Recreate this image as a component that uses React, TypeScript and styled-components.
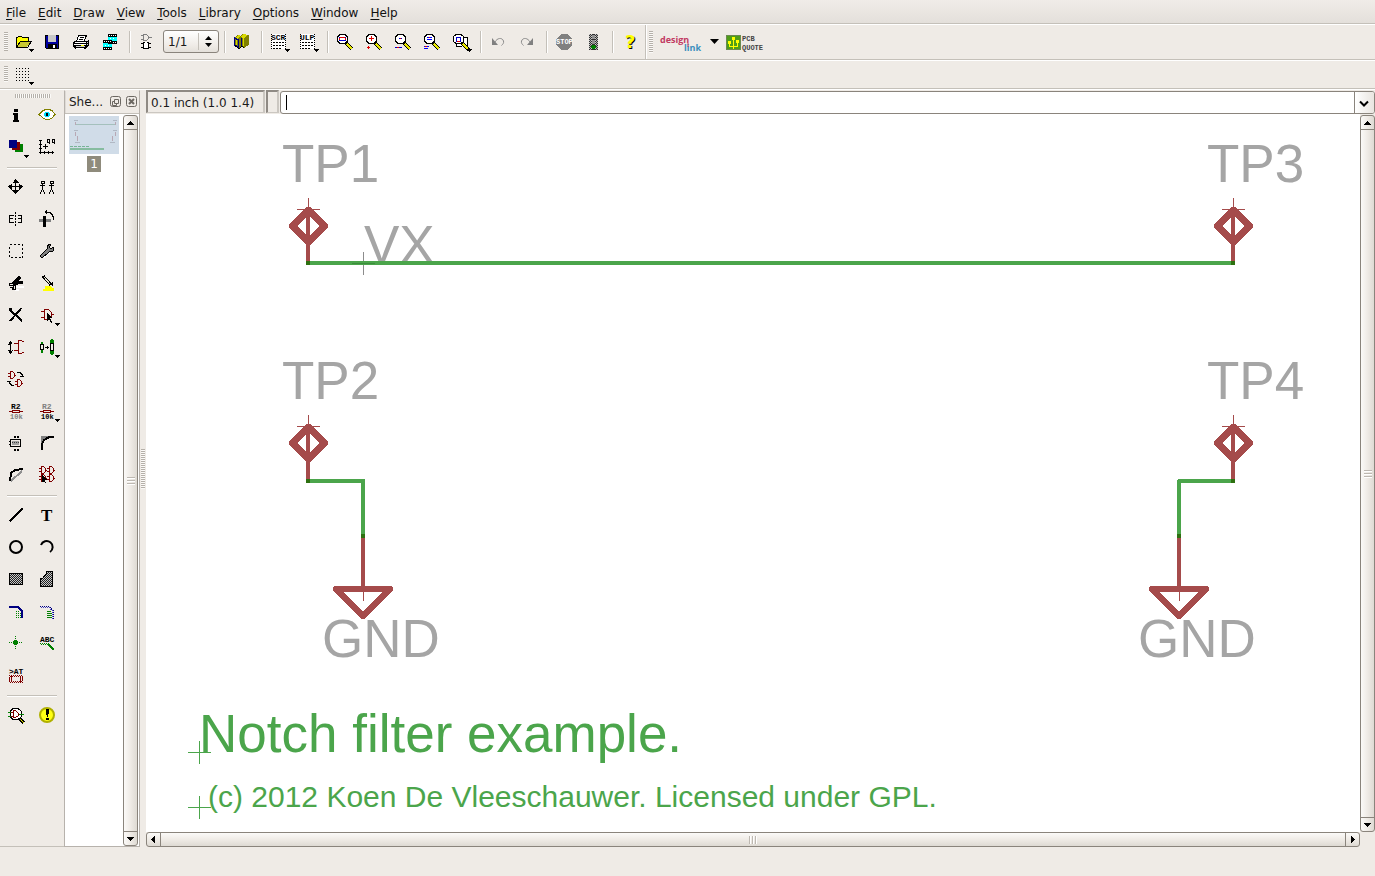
import React from "react";
import styled, { createGlobalStyle } from "styled-components";

const C = {
  face: "#efebe6",
  line: "#c4c0b9",
  edge: "#8a847c",
  red: "#800000",
  navy: "#000080",
  green: "#008000",
  olive: "#808000",
  yellow: "#ffff00",
  symbol: "#a54b4b",
  net: "#4ba54b",
  name: "#a5a5a5",
};

const Global = createGlobalStyle`
  * { box-sizing: border-box; }
  html, body { margin: 0; background: ${C.face}; }
  body, button, input { font: 12px/16px "DejaVu Sans", sans-serif; color: #1a1a1a; }
  button { border: 0; padding: 0; background: none; }
`;

const Page = styled.div`
  display: flex;
  flex-direction: column;
  min-height: 100vh;
  background: ${C.face};
`;

const MenuBar = styled.nav`
  display: flex;
  gap: 12px;
  height: 25px;
  padding: 1px 6px 0;
  background: linear-gradient(#f0ece8, #e3dfda);
  border-bottom: 1px solid #fff;
  box-shadow: inset 0 -1px 0 ${C.line};
`;

const MenuItem = styled.button`
  height: 23px;
  color: #111;
  u { text-underline-offset: 2px; }
`;

const Toolbar = styled.div<{ $height: number }>`
  display: flex;
  align-items: center;
  height: ${(p) => p.$height}px;
  padding: 0 0 2px 4px;
  border-bottom: 1px solid #fff;
  box-shadow: inset 0 -1px 0 ${C.line};
`;

const Grip = styled.span<{ $size: number; $across?: boolean; $gap?: number }>`
  flex: none;
  width: ${(p) => (p.$across ? p.$size : 4)}px;
  height: ${(p) => (p.$across ? 4 : p.$size)}px;
  margin-right: ${(p) => p.$gap ?? 0}px;
  background: repeating-linear-gradient(
    ${(p) => (p.$across ? "90deg" : "180deg")},
    #b5b0a9 0 1px,
    #fbfaf8 1px 2px
  );
`;

const ToolButton = styled.button`
  flex: none;
  display: flex;
  align-items: center;
  width: 29px;
  height: 32px;
  padding-left: 3px;
`;

const Divider = styled.span<{ $gap?: number }>`
  flex: none;
  width: 2px;
  height: 22px;
  margin: 0 2px 0 ${(p) => p.$gap ?? 4}px;
  background: linear-gradient(90deg, ${C.line} 0 1px, #fff 1px 2px);
`;

const Spin = styled.div`
  flex: none;
  display: flex;
  align-items: center;
  width: 56px;
  height: 23px;
  margin-left: 1px;
  border: 1px solid ${C.edge};
  border-radius: 3px;
  background: linear-gradient(#fff, #efebe6 70%, #e4e0da);
`;

const SpinInput = styled.input`
  width: 35px;
  height: 17px;
  padding: 0 0 0 4px;
  border: 0;
  border-right: 1px solid ${C.line};
  background: none;
  outline: none;
`;

const SpinArrows = styled.div`
  display: flex;
  flex: 1;
  flex-direction: column;
  align-items: center;
  gap: 3px;
`;

const SpinArrow = styled.button<{ $down?: boolean }>`
  width: 7px;
  height: 4px;
  background: #000;
  clip-path: ${(p) => (p.$down ? "polygon(0 0, 100% 0, 50% 100%)" : "polygon(50% 0, 100% 100%, 0 100%)")};
`;

const BarEnd = styled.span`
  flex: none;
  width: 2px;
  height: 34px;
  margin-right: 2px;
  background: linear-gradient(90deg, ${C.line} 0 1px, #fff 1px 2px);
`;

const LinkButton = styled.button<{ $gap: number }>`
  flex: none;
  display: flex;
  align-items: center;
  height: 32px;
  margin-left: ${(p) => p.$gap}px;
`;

const Body = styled.div`
  flex: 1;
  display: flex;
  min-height: 0;
`;

const Tools = styled.aside`
  flex: none;
  width: 64px;
  display: flex;
  flex-direction: column;
  align-items: flex-start;
  padding-top: 4px;
  border-bottom: 1px solid ${C.line};
`;

const GripRow = styled.div`
  height: 5px;
  padding-left: 15px;
  display: flex;
`;

const ToolGrid = styled.div`
  display: grid;
  grid-template-columns: 31px 31px;
  grid-auto-rows: 32px;
`;

const PaletteButton = styled.button<{ $first?: boolean }>`
  display: flex;
  align-items: center;
  padding-left: 4px;
  ${(p) => p.$first && "grid-column-start: 1;"}
`;

const ToolRule = styled.span`
  width: 50px;
  height: 2px;
  margin: 4px 0 2px 7px;
  background: linear-gradient(${C.line} 0 1px, #fff 1px 2px);
`;

const Dock = styled.section`
  flex: none;
  width: 76px;
  display: flex;
  flex-direction: column;
  border: 1px solid #b7b2ac;
  border-top-color: ${C.face};
  box-shadow: inset 1px 0 0 #dedad5;
`;

const DockTitle = styled.header`
  display: flex;
  align-items: center;
  gap: 4px;
  height: 23px;
  padding: 0 1px 0 4px;
  border-bottom: 1px solid ${C.line};
  span { flex: 1; }
`;

const DockButton = styled.button`
  width: 12px;
  height: 12px;
  svg { display: block; }
`;

const DockBody = styled.div`
  flex: 1;
  display: flex;
  background: #fff;
  padding: 0 1px 0 4px;
`;

const SheetList = styled.div`
  flex: 1;
  display: flex;
  flex-direction: column;
  align-items: flex-start;
  padding-top: 2px;
`;

const Sheet = styled.button`
  display: flex;
  flex-direction: column;
  align-items: center;
  gap: 2px;
  width: 50px;
  svg { display: block; background: #d0dce8; }
  span { width: 14px; background: #8f8b7c; color: #fff; }
`;

const Splitter = styled.div`
  flex: none;
  width: 6px;
  display: flex;
  align-items: center;
  justify-content: center;
`;

const Editor = styled.main`
  flex: 1;
  min-width: 0;
  display: flex;
  flex-direction: column;
`;

const CommandRow = styled.div`
  display: flex;
  height: 24px;
  padding-bottom: 1px;
  gap: 1px;
`;

const Sunken = styled.output<{ $width: number }>`
  flex: none;
  width: ${(p) => p.$width}px;
  padding: 3px 0 0 3px;
  white-space: nowrap;
  border: 2px solid;
  border-color: #8f8a84 #cbc7c1 #cbc7c1 #8f8a84;
  border-bottom-width: 1px;
`;

const Combo = styled.div`
  flex: 1;
  display: flex;
  align-items: center;
  height: 23px;
  margin-top: 1px;
  border: 1px solid ${C.edge};
  border-radius: 3px;
  background: #fff;
  overflow: hidden;
`;

const Caret = styled.span`
  width: 1px;
  height: 15px;
  margin-left: 5px;
  background: #000;
`;

const CommandInput = styled.input`
  flex: 1;
  min-width: 0;
  height: 20px;
  border: 0;
  padding: 0 4px;
  outline: none;
  background: none;
`;

const ComboButton = styled.button`
  width: 20px;
  height: 21px;
  padding: 2px 0 0 4px;
  border-left: 1px solid ${C.edge};
  background: linear-gradient(90deg, #fff, #e9e5e0);
  svg { display: block; }
`;

const View = styled.div`
  flex: 1;
  display: grid;
  grid-template-columns: 1fr 15px;
  grid-template-rows: 1fr 15px;
  min-height: 0;
`;

const Canvas = styled.div`
  background: #fff;
  overflow: hidden;
  min-height: 300px;
  contain: size;
  svg { display: block; width: 100%; height: 100%; }
`;

const Scroll = styled.div<{ $across?: boolean; $top?: number }>`
  display: flex;
  flex: none;
  flex-direction: ${(p) => (p.$across ? "row" : "column")};
  ${(p) => (p.$across ? "height: 15px;" : "width: 15px;")}
  margin-top: ${(p) => p.$top ?? 0}px;
  border: 1px solid ${C.edge};
  border-radius: 3px;
  background: linear-gradient(${(p) => (p.$across ? "180deg" : "90deg")}, #fbfaf8, #efebe6 50%, #dedad3);
`;

const ScrollEnd = styled.button`
  flex: none;
  width: 13px;
  height: 13px;
  svg { display: block; }
`;

const Thumb = styled.div<{ $across?: boolean }>`
  flex: 1;
  display: flex;
  align-items: center;
  justify-content: center;
  border: solid ${C.edge};
  border-width: ${(p) => (p.$across ? "0 1px" : "1px 0")};
`;

const ThumbGrip = styled.span<{ $across?: boolean }>`
  width: 8px;
  height: 8px;
  background: repeating-linear-gradient(
    ${(p) => (p.$across ? "90deg" : "180deg")},
    #bdb8b1 0 1px,
    #fff 1px 2px,
    transparent 2px 3px
  );
`;

const StatusBar = styled.footer`
  height: 29px;
`;

const IconSvg = styled.svg`
  display: block;
  flex: none;
  overflow: visible;
`;

/* ---------- drawing helpers ---------- */

type Kids = { children?: React.ReactNode };

const Icon = ({ children }: Kids) => (
  <IconSvg width="24" height="24" viewBox="0 0 24 24" shapeRendering="crispEdges" fill="none" stroke="#000" aria-hidden="true">
    {children}
  </IconSvg>
);

const Fill = ({ d, c = "#000" }: { d: string; c?: string }) => <path d={d} fill={c} stroke="none" />;
const Line = ({ d, c = "#000", w = 1, dash }: { d: string; c?: string; w?: number; dash?: string }) => (
  <path d={d} stroke={c} strokeWidth={w} strokeDasharray={dash} />
);
const Drop = ({ x = 17, y = 19 }: { x?: number; y?: number }) => <Fill d={`M${x} ${y}h5v1h-1v1h-1v1h-1v-1h-1v-1h-1z`} />;

const Mini = ({ x, y, c = "#000", size = 7, w, children }: { x: number; y: number; c?: string; size?: number; w?: string } & Kids) => (
  <text x={x} y={y} fill={c} stroke="none" fontFamily='"Liberation Mono", monospace' fontSize={size} fontWeight={w ?? "bold"}>
    {children}
  </text>
);

const Lens = ({ children }: Kids) => (
  <Icon>
    <Line d="M12 13L18 19" c="#000" w={4} />
    <Line d="M13 14L18 19" c="#e8e800" w={2} />
    <path d="M6 4.500h5l2.500 2.500v4l-2.500 2.500h-5l-2.500-2.500v-4z" fill="#fff" />
    {children}
  </Icon>
);

const gate = (x: number, y: number) =>
  `M${x + 2.5} ${y + 0.5}h2l2 2v3l-2 2h-2zM${x} ${y + 2.5}h2M${x} ${y + 5.5}h2M${x + 7} ${y + 4.5}h1`;

/* ---------- tool bar icons ---------- */

const OpenIcon = () => (
  <Icon>
    <Fill d="M4 7h6v1h6v3h-8l-4 6z" c={C.yellow} />
    <Line d="M4.500 18V7.500h1l1-1h3l1 1h5.500v3" />
    <Fill d="M5 17l4-6h10l-4 6z" c="#c8c832" />
    <Line d="M4.500 17.500l4-6.500h11l-4 6.500z" />
    <Drop />
  </Icon>
);
const SaveIcon = () => (
  <Icon>
    <Fill d="M4 5h14v14H5v-1H4z" c="#000" />
    <Fill d="M5 6h12v12H5z" c="#0000a0" />
    <Fill d="M7 5h8v7H7z" c="#c8c8c8" />
    <Fill d="M7 14h9v4H7z" />
    <Fill d="M12 15h2v3h-2z" c="#fff" />
  </Icon>
);
const PrintIcon = () => (
  <Icon>
    <Fill d="M8 5h8l-2 6H6z" c="#fff" />
    <Line d="M8.500 5v1l-2 5M8 5.500h8v1l-2 5M10 7.500h4M9 9.500h4" />
    <Fill d="M4 11h13l2-2v6l-3 4H5l-2-2v-5z" />
    <Fill d="M5 12h11v1H5zM4 14h12v1H4z" c="#fff" />
    <Fill d="M6 16h9v1H6zM17 12h1v1h-1zM17 14h1v1h-1z" c="#d0d0d0" />
    <Fill d="M11 15h3v1h-3z" c={C.yellow} />
    <Fill d="M6 18h8v1H6z" c="#fff" />
  </Icon>
);
const CamIcon = () => (
  <Icon>
    <Fill d="M9 6h9v6H9zM4 12h9v6H4z" c="#00ffff" />
    <Fill d="M9 4h9v3H9zM9 11h9v3H9zM4 10h9v3H4zM4 17h9v3H4z" />
    <Line d="M10 5.500h8M14 12.500h4M5 11.500h8M5 18.500h8" c="#fff" dash="1 1" />
    <Line d="M10.500 8.500h6M5.500 15.500h4" c="#fff" dash="1 2" />
  </Icon>
);
const BoardIcon = () => (
  <Icon>
    <Line d="M7.500 4.500h3l2 2v2l-2 2h-3zM5 5.500h2M5 9.500h2M13 7.500h3" c="#808080" />
    <Fill d="M7 13h6v5H7z" c="#fff" />
    <Line d="M7.500 12.500h5v6h-5zM5 13.500h2M5 17.500h2M13 13.500h2M13 17.500h2" />
    <Line d="M9 12.500h2" c="#fff" />
  </Icon>
);
const LibraryIcon = () => (
  <Icon>
    <Fill d="M3 8l4-3 2 1 3-2 3 1 3 0v10l-5 3-2-1-2 1-6-3z" c={C.olive} />
    <Fill d="M4 8l4-3 2 1-4 3zM9 7l4-3 4 1-4 3z" c="#d8d800" />
    <Line d="M3.500 8v7l4 2v-7zM10.500 8v9" c={C.navy} />
    <Line d="M5.500 10v5M12.500 8v8" c="#d8d800" />
    <Line d="M4 15.500l4 3 3-2 2 1" />
  </Icon>
);
const ScriptIcon = ({ label }: { label: string }) => (
  <Icon>
    <Fill d="M3 4h15v15H3z" c="#fff" />
    <Mini x={3} y={10} size={8}>{label}</Mini>
    <Line d="M5 12.500h11M5 15.500h11M5 18.500h9" dash="2 1" />
    <Line d="M3.500 4v15M17.500 4v15" dash="1 1" />
    <Drop />
  </Icon>
);
const ZoomFit = () => (
  <Lens>
    <Line d="M5.500 7.500h6v3h-6z" c="#e00000" />
    <Line d="M5 7.500h1M11 7.500h1M5 10.500h7" c="#0000d0" />
  </Lens>
);
const ZoomIn = () => (
  <Lens>
    <Line d="M6 8.500h5M8.500 6v5M4 17.500h3M5.500 16v3" c="#e00000" />
  </Lens>
);
const ZoomOut = () => (
  <Lens>
    <Line d="M7 8.500h3M3 17.500h7" c="#0000d0" />
    <Line d="M8 8.500h1M5 17.500h2" c="#e00000" />
  </Lens>
);
const ZoomRedraw = () => (
  <Lens>
    <Line d="M6 7.500h5M6 9.500h5M3 16.500h5M3 18.500h4" c="#0000ff" />
    <Line d="M8 7.500h1M4 16.500h2" c="#e00000" />
  </Lens>
);
const ZoomSelect = () => (
  <Icon>
    <Fill d="M8 8h10v9H6z" c="#fff" />
    <Line d="M13 7.500h4.500v9M6.500 13v3.500h5" />
    <Line d="M12 13L19 20" w={4} />
    <Line d="M13 14L18 19" c="#e8e800" w={2} />
    <path d="M6 4.500h5l2.500 2v5l-2.500 2h-5l-2.500-2v-5z" fill="#fff" />
    <Line d="M6.500 7.500h4v4h-4z" c="#0000d0" />
    <Line d="M7 11.500h3" c="#e00000" />
    <Drop />
  </Icon>
);
const UndoIcon = ({ flip }: { flip?: boolean }) => (
  <Icon>
    <g transform={flip ? "translate(22 0) scale(-1 1)" : undefined} shapeRendering="auto">
      <Fill d="M5 8l6 7H5z" c="#808080" />
      <path d="M8 12C10 8 15 7 16.500 11c.5 2-.5 3-2 4.500" stroke="#8c8c8c" />
    </g>
  </Icon>
);
const StopIcon = () => (
  <Icon>
    <Fill d="M8 4h6l5 5v6l-5 5H8l-5-5V9z" c="#808080" />
    <Mini x={3} y={14} size={7} c="#fff">STOP</Mini>
  </Icon>
);
const TrafficIcon = () => (
  <Icon>
    <Fill d="M7 4h9v16H7z" c="#303030" />
    <Line d="M7.500 4v16M9.500 4v16M13.500 4v16M15.500 4v16" c="#c8c8c8" dash="1 1" />
    <Line d="M8.500 5v15M14.500 5v15" c="#a8a8a8" dash="1 1" />
    <Fill d="M10 5h3v4h-3zM10 10h3v4h-3z" c="#909090" />
    <Fill d="M10 15h3v1h1v2h-1v1h-3v-1H9v-2h1z" c={C.green} />
  </Icon>
);
const HelpIcon = () => (
  <Icon>
    <text x="7" y="19" fontFamily='"DejaVu Sans", sans-serif' fontWeight="bold" fontSize="18" fill="#000" stroke="none">?</text>
    <text x="6" y="18" fontFamily='"DejaVu Sans", sans-serif' fontWeight="bold" fontSize="18" fill="#ffff00" stroke="none" aria-hidden="true">?</text>
  </Icon>
);

/* ---------- palette icons ---------- */

const InfoIcon = () => (
  <Icon>
    <Fill d="M10 6h4v3h-4zM9 10h5v7h1v2H9v-2h1v-5H9z" />
  </Icon>
);
const EyeIcon = () => (
  <Icon>
    <path d="M4 11.500l4-4 3-1h3l3 1 3 4-3 3.500-3 1.500h-3l-3-1.500z" fill="#fff" stroke={C.olive} />
    <circle cx="12" cy="11.500" r="3" fill="#00e0ff" stroke="none" />
    <Fill d="M11 10h2v3h-2z" />
  </Icon>
);
const LayersIcon = () => (
  <Icon>
    <Fill d="M11 9h8v8h-8z" c={C.green} />
    <Fill d="M8 7h8v8H8z" c={C.red} />
    <Fill d="M5 5h8v8H5z" c={C.navy} />
    <Drop x={20} y={20} />
  </Icon>
);
const MarkIcon = () => (
  <Icon>
    <Line d="M5.500 5v14M4 5.500h3M4 9.500h3M4 13.500h3M4 17.500h15M9.500 16v3M13.500 16v3M17.500 16v3" />
    <Line d="M8 11.500h5M10.500 9v5M12.500 4.500h2v3h-2zM14.500 7v2M17.500 4.500h2v3h-2zM19.500 7v2" />
  </Icon>
);
const MoveIcon = () => (
  <Icon>
    <Line d="M5 11.500h14M11.500 5v14" />
    <Fill d="M11 4h1l3 4H9zM11 19h1l3-4H8zM4 11v1l4 3V9zM19 11v1l-4 3V9z" />
  </Icon>
);
const CopyIcon = () => (
  <Icon>
    {[0, 9].map((x) => (
      <Line key={x} d={`M${x + 6} 6.500h3v2h-3zM${x + 7.5} 9v5M${x + 5} 10.500h5M${x + 7.5} 14l-2 4M${x + 7.5} 14l2 4M${x + 5} 18.500h1M${x + 9} 18.500h1`} />
    ))}
  </Icon>
);
const MirrorIcon = () => (
  <Icon>
    <Line d="M11.500 5v15" dash="2 1" />
    <Line d="M10 8.500h-4.500v7H10M5 11.500h4M14 8.500h3.500v7H14M14 11.500h4" />
  </Icon>
);
const RotateIcon = () => (
  <Icon>
    <Fill d="M4 12h12v3H4z" c="#808080" />
    <Fill d="M8 9h3v11H8z" />
    <Line d="M10 5.500h5l2 2 1.500 3v2" />
    <Fill d="M9 5l3-2v5z" />
  </Icon>
);
const GroupIcon = () => (
  <Icon>
    <path d="M5.500 5.500h13v13h-13z" strokeDasharray="2 2" />
  </Icon>
);
const WrenchIcon = () => (
  <Icon>
    <path d="M5 17l7-7v-3l3-2 1 1-2 2 2 2 2-2h1l-1 4-4 1-7 6z" fill="#808080" stroke="none" />
    <Line d="M5 17l7-7v-3l3-2 1 1-2 2 2 2 2-2h1l-1 4-4 1-7 6z" />
    <Line d="M7 17l6-5" c="#808080" w={2} />
    <Line d="M9 18.500l6-5" c="#fff" />
  </Icon>
);
const CutIcon = () => (
  <Icon>
    <Line d="M12 15.500h8M11 18.500h4" c="#fff" w={2} />
    <path d="M9 13L16 6M9 13L19 11" strokeWidth="3" />
    <path d="M5.500 12.500h4v2h-4zM9.500 14.500h2v4h-2zM5.500 16.500h3v2" />
  </Icon>
);
const PasteIcon = () => (
  <Icon>
    <Fill d="M10 15h6l1 2h2v3H8v-2h2z" c={C.yellow} />
    <Line d="M8 5L16 14" w={3} />
    <Line d="M9 6L15 13" c="#e0e0d0" />
    <Line d="M17.500 11v4M15 13.500h3" />
  </Icon>
);
const DeleteIcon = () => (
  <Icon>
    <Line d="M5 6L18 18" w={2} />
    <Line d="M17.500 5L6 18" w={2} />
    <Fill d="M5 5h3v2H5z" />
  </Icon>
);
const AddIcon = () => (
  <Icon>
    <Line d="M9.500 6.500h4l3 3v4l-3 3h-4zM6 8.500h3M6 14.500h3M17 11.500h2" c={C.red} />
    <Fill d="M12 10l5 5h-2l2 4-1 1-2-4-2 2z" />
    <Drop x={20} y={20} />
  </Icon>
);
const PinSwapIcon = () => (
  <Icon>
    <Line d="M6.500 7v11M4 9.500h1l1.500-3 2 3M4 15.500h1l1.500 3 2-3" />
    <Line d="M19.500 7l-2-1.500h-3v13h3l2-1.500M10 8.500h5M10 15.500h5" c={C.red} />
  </Icon>
);
const ReplaceIcon = () => (
  <Icon>
    <Line d="M7 7v11" c={C.green} w={2} />
    <Fill d="M15 5h4v3h-4zM15 16h4v3h-4zM16 4h2v16h-2z" c={C.green} />
    <path d="M5.500 9.500h3v5h-3zM15.500 8.500h3v7h-3z" fill={C.face} />
    <Line d="M10 12.500h4M12.500 11v3" />
    <Drop x={20} y={20} />
  </Icon>
);
const GateSwapIcon = () => (
  <Icon>
    <Line d={gate(4, 4)} c={C.red} />
    <Line d={gate(11, 12)} c={C.red} />
    <Line d="M13 5.500h3l2 2v2M16 9.500h4M10 18.500h-2l-3-3v-2M3 14.500h4" />
  </Icon>
);
const ResistorIcon = ({ top, bottom, drop }: { top: string; bottom: string; drop?: boolean }) => (
  <Icon>
    <Mini x={7} y={10} c={top} size={8}>R2</Mini>
    <Line d="M5 12.500h3.500M15.500 12.500h3.500M8.500 11.500h7v2h-7z" c={C.red} />
    <Mini x={6} y={20} c={bottom} size={7}>10k</Mini>
    {drop && <Drop x={20} y={20} />}
  </Icon>
);
const SmashIcon = () => (
  <Icon>
    <Line d="M10 5.500h5M10 18.500h6" w={2} dash="2 1" />
    <Line d="M6.500 8.500h10v7h-10zM5 10.500h1M5 13.500h1" />
    <Fill d="M8 10h7v4H8z" c="#a0a0a0" />
    <Line d="M8 11.500h7" c="#404040" dash="1 1" />
  </Icon>
);
const MiterIcon = () => (
  <Icon>
    <Fill d="M6 5h8l-5 3-3 5z" c="#808080" />
    <path d="M7 19v-4c0-5 4-8 8-9h4" strokeWidth="2" />
  </Icon>
);
const SplitIcon = () => (
  <Icon>
    <Line d="M18 8L7 18" c="#909090" w={2} />
    <path d="M6 18L7 10 11 7 19 6" strokeWidth="2" />
  </Icon>
);
const InvokeIcon = () => (
  <Icon>
    <Line d={gate(4, 3) + gate(12, 3) + gate(4, 11) + gate(12, 11)} c={C.red} />
    <Fill d="M7 12l5 5h-2l1 3-2-1-2 0z" />
  </Icon>
);
const WireIcon = () => (
  <Icon>
    <path d="M5.500 18.500L18.500 5.500" strokeWidth="2" />
  </Icon>
);
const TextIcon = () => (
  <Icon>
    <text x="6" y="18" fontFamily='"Liberation Serif", serif' fontSize="17" fontWeight="bold" fill="#000" stroke="none">T</text>
  </Icon>
);
const CircleIcon = () => (
  <Icon>
    <circle cx="12" cy="12" r="6" strokeWidth="2" shapeRendering="auto" />
  </Icon>
);
const ArcIcon = () => (
  <Icon>
    <path d="M6 10A6 6 0 1 1 15 17" strokeWidth="2" shapeRendering="auto" />
  </Icon>
);
const RectIcon = () => (
  <Icon>
    <defs>
      <pattern id="hatch" width="2" height="2" patternUnits="userSpaceOnUse" stroke="none">
        <path d="M0 0h1v1H0zM1 1h1v1H1z" fill="#202020" />
        <path d="M1 0h1v1H1zM0 1h1v1H0z" fill="#c8c8c8" />
      </pattern>
    </defs>
    <path d="M5.500 6.500h13v11h-13z" fill="url(#hatch)" />
  </Icon>
);
const PolygonIcon = () => (
  <Icon>
    <path d="M5.500 19.500v-8h2l4-5v-2h6v15z" fill="url(#hatch)" />
  </Icon>
);
const BusIcon = () => (
  <Icon>
    <Line d="M5 8h9l4 4v7" c={C.navy} w={2} />
    <Line d="M12.500 12v7M14.500 12v7M16.500 14v5" c={C.green} dash="1 1" />
  </Icon>
);
const NetIcon = () => (
  <Icon>
    <Line d="M5 7.500h9l4 4v8" c={C.navy} dash="1 1" />
    <Line d="M6 8.500h8l3 3v8" c="#4040c0" dash="1 1" />
    <Line d="M12 12.500h4M12 14.500h5M12 16.500h5M12 18.500h5" c={C.green} />
  </Icon>
);
const JunctionIcon = () => (
  <Icon>
    <Line d="M11.500 5v14M5 11.500h14" c={C.green} dash="1 1" />
    <Fill d="M10 9h3v1h1v3h-1v1h-3v-1H9v-3h1z" c={C.green} />
  </Icon>
);
const LabelIcon = () => (
  <Icon>
    <Mini x={5} y={11} size={8}>ABC</Mini>
    <Line d="M5 12.500h8M6 13.500h8" c={C.green} dash="1 1" />
    <Line d="M13 13L19 19" c={C.green} w={2} />
  </Icon>
);
const AttributeIcon = () => (
  <Icon>
    <Mini x={5} y={11} size={8}>&gt;AT</Mini>
    <path d="M5 12.500h14M6 13.500h13M5 18.500h14M6 19.500h13" stroke={C.red} strokeDasharray="1 1" />
    <Line d="M7.500 13v6M16.500 13v6M5.500 14v4M18.500 14v4" c={C.red} />
  </Icon>
);
const ErcIcon = () => (
  <Icon>
    <Line d="M15 15L20 20" w={3} />
    <Line d="M16 16L20 20" c="#e8e800" />
    <path d="M9 5.500h5l3.500 3v5l-3.500 3H9l-3-3v-5z" fill="#fff" />
    <Line d="M4 9.500h5M4 13.500h5M15 11.500h5" c={C.green} />
    <Line d="M9.500 7.500h2l3 3v2l-3 2h-2zM7 9.500h2M7 13.500h2" c={C.red} />
  </Icon>
);
const WarningIcon = () => (
  <Icon>
    <circle cx="12" cy="12" r="7" fill="#ffff14" stroke="#b0b000" shapeRendering="auto" strokeWidth="2" />
    <Fill d="M11 6h3v3l-1 5h-1l-1-5zM11 15h3v2h-3z" />
  </Icon>
);

const DesignLinkLogo = () => (
  <IconSvg width="42" height="20" viewBox="0 0 42 20" aria-hidden="true" fontFamily='"Open Sans", sans-serif' fontWeight="700">
    <text x="0" y="11" fontSize="9" fill="#c23a62">design</text>
    <text x="24" y="19" fontSize="9" fill="#3a8fbe">link</text>
    <Line d="M28 11v4" c="#c23a62" />
  </IconSvg>
);
const PcbLogo = () => (
  <IconSvg width="38" height="20" viewBox="0 0 38 20" aria-hidden="true" shapeRendering="crispEdges" fill="none">
    <Fill d="M0 3h15v15H0z" c="#6a8a50" />
    <Fill d="M1 4h13v13H1z" c="#4f9d18" />
    <Line d="M3.500 11v3h3.500M7.500 7v10M11.500 11v3H8" c={C.yellow} />
    <Fill d="M6 5h3v3H6zM2 9h3v3H2zM10 8h3v3h-3z" c={C.yellow} />
    <Mini x={16} y={9} c="#444">PCB</Mini>
    <Mini x={16} y={18} c="#444">QUOTE</Mini>
  </IconSvg>
);

/* ---------- data ---------- */

type Tool = [string, React.ReactNode, boolean?];

const fileTools: Tool[] = [["Open", <OpenIcon />], ["Save", <SaveIcon />], ["Print", <PrintIcon />], ["CAM", <CamIcon />]];
const zoomTools: Tool[] = [
  ["Fit", <ZoomFit />],
  ["Zoom in", <ZoomIn />],
  ["Zoom out", <ZoomOut />],
  ["Redraw", <ZoomRedraw />],
  ["Select", <ZoomSelect />],
];

const palette: Tool[][] = [
  [["Info", <InfoIcon />], ["Show", <EyeIcon />], ["Display", <LayersIcon />], ["Mark", <MarkIcon />]],
  [
    ["Move", <MoveIcon />], ["Copy", <CopyIcon />],
    ["Mirror", <MirrorIcon />], ["Rotate", <RotateIcon />],
    ["Group", <GroupIcon />], ["Change", <WrenchIcon />],
    ["Cut", <CutIcon />], ["Paste", <PasteIcon />],
    ["Delete", <DeleteIcon />], ["Add", <AddIcon />],
    ["Pinswap", <PinSwapIcon />], ["Replace", <ReplaceIcon />],
    ["Gateswap", <GateSwapIcon />],
    ["Name", <ResistorIcon top="#000" bottom="#808080" />, true],
    ["Value", <ResistorIcon top="#808080" bottom="#000" drop />],
    ["Smash", <SmashIcon />], ["Miter", <MiterIcon />],
    ["Split", <SplitIcon />], ["Invoke", <InvokeIcon />],
  ],
  [
    ["Wire", <WireIcon />], ["Text", <TextIcon />],
    ["Circle", <CircleIcon />], ["Arc", <ArcIcon />],
    ["Rect", <RectIcon />], ["Polygon", <PolygonIcon />],
    ["Bus", <BusIcon />], ["Net", <NetIcon />],
    ["Junction", <JunctionIcon />], ["Label", <LabelIcon />],
    ["Attribute", <AttributeIcon />],
  ],
  [["ERC", <ErcIcon />], ["Errors", <WarningIcon />]],
];

const menus = ["File", "Edit", "Draw", "View", "Tools", "Library", "Options", "Window", "Help"];

const Buttons = ({ items }: { items: Tool[] }) => (
  <>
    {items.map(([label, icon]) => (
      <ToolButton key={label} aria-label={label}>{icon}</ToolButton>
    ))}
  </>
);

/* ---------- scroll bars ---------- */

const arrows = {
  up: "M6 5h1v1h1v1h1v1h1v1H3V8h1V7h1V6h1z",
  down: "M3 5h7v1H9v1H8v1H7v1H6V8H5V7H4V6H3z",
  left: "M8 3v7H7V9H6V8H5V7H4V6h1V5h1V4h1V3z",
  right: "M5 3v7h1V9h1V8h1V7h1V6H8V5H7V4H6V3z",
};

const EndButton = ({ dir }: { dir: keyof typeof arrows }) => (
  <ScrollEnd aria-label={`Scroll ${dir}`}>
    <svg width="13" height="13" shapeRendering="crispEdges"><path d={arrows[dir]} /></svg>
  </ScrollEnd>
);

const ScrollBar = ({ across, top }: { across?: boolean; top?: number }) => (
  <Scroll $across={across} $top={top}>
    <EndButton dir={across ? "left" : "up"} />
    <Thumb $across={across}><ThumbGrip $across={across} /></Thumb>
    <EndButton dir={across ? "right" : "down"} />
  </Scroll>
);

/* ---------- schematic ---------- */

const Cross = ({ x, y, c }: { x: number; y: number; c: string }) => (
  <path d={`M${x - 11} ${y + 0.5}h23M${x + 0.5} ${y - 11}v23`} stroke={c} fill="none" />
);

const TestPoint = ({ x, y, label }: { x: number; y: number; label: string }) => (
  <g>
    <text x={x - 26} y={y - 27} fill={C.name}>{label}</text>
    <Cross x={x} y={y} c={C.symbol} />
    <path d={`M${x + 0.5} ${y + 1}l16 16-16 16-16-16z`} fill="#fff" stroke={C.symbol} strokeWidth="7" strokeLinejoin="round" />
    <path d={`M${x} ${y}v54`} stroke={C.symbol} strokeWidth="4" />
  </g>
);

const Ground = ({ x, y }: { x: number; y: number }) => (
  <g>
    <text x={x - 41} y={y + 121} fill={C.name}>GND</text>
    <path d={`M${x} ${y}v53`} stroke={C.symbol} strokeWidth="4" />
    <path d={`M${x - 27} ${y + 53}h54l-27 27z`} fill="none" stroke={C.symbol} strokeWidth="6" strokeLinejoin="round" />
    <path d={`M${x + 0.5} ${y + 53}v12`} stroke={C.symbol} />
  </g>
);

const Pad = ({ x, y }: { x: number; y: number }) => <rect x={x - 2} y={y - 2} width="4" height="4" rx="1" fill="#2d7010" />;

const Schematic = () => (
  <Canvas>
    <svg shapeRendering="crispEdges" fontFamily='"Liberation Sans", Arial, sans-serif' fontSize="53" role="img" aria-label="Schematic">
      <TestPoint x={162} y={95} label="TP1" />
      <TestPoint x={1087} y={95} label="TP3" />
      <TestPoint x={162} y={312} label="TP2" />
      <TestPoint x={1087} y={312} label="TP4" />
      <Ground x={217} y={422} />
      <Ground x={1033} y={422} />
      <text x="218" y="149" fill={C.name}>VX</text>
      <g stroke={C.net} strokeWidth="4" fill="none" strokeLinejoin="round">
        <path d="M162 149H1087" />
        <path d="M162 367H217V422" />
        <path d="M1087 367H1033V422" />
      </g>
      <path d="M206 149.500h23" stroke="#3c8c3c" />
      <path d="M217.500 138v9M217.500 151v10" stroke="#8c8c8c" />
      <Pad x={162} y={149} />
      <Pad x={1087} y={149} />
      <Pad x={162} y={367} />
      <Pad x={1087} y={367} />
      <Pad x={217} y={422} />
      <Pad x={1033} y={422} />
      <Cross x={53} y={638} c={C.net} />
      <text x="53" y="638" fill={C.net}>Notch filter example.</text>
      <Cross x={53} y={693} c={C.net} />
      <text x="62" y="693" fontSize="30" fill={C.net}>(c) 2012 Koen De Vleeschauwer. Licensed under GPL.</text>
    </svg>
  </Canvas>
);

const SheetPreview = () => (
  <svg width="50" height="38" shapeRendering="crispEdges" aria-hidden="true">
    <path d="M7 8.500h39" stroke="#a4c0bc" />
    <path d="M5 4.500h4M44 4.500h4M5 14.500h4M44 14.500h4M6 26.500h5M41 26.500h5" stroke="#b0b8c4" />
    <path d="M6.500 6v3M46.500 6v3M6.500 16v4M8.500 20v5M46.500 16v4M43.500 20v5" stroke="#b8a8b4" />
    <path d="M1 30.500h19" stroke="#78b498" strokeDasharray="3 1" />
    <path d="M1 33h34" stroke="#86bca0" strokeWidth="2" />
  </svg>
);

export default function App() {
  return (
    <Page>
      <Global />
      <MenuBar>
        {menus.map((m) => (
          <MenuItem key={m}><u>{m[0]}</u>{m.slice(1)}</MenuItem>
        ))}
      </MenuBar>
      <Toolbar $height={36}>
        <Grip $size={19} $gap={1} />
        <Buttons items={fileTools} />
        <Divider />
        <ToolButton aria-label="Board"><BoardIcon /></ToolButton>
        <Spin>
          <SpinInput aria-label="Sheet" defaultValue="1/1" />
          <SpinArrows>
            <SpinArrow aria-label="Next sheet" />
            <SpinArrow $down aria-label="Previous sheet" />
          </SpinArrows>
        </Spin>
        <Divider $gap={5} />
        <ToolButton aria-label="Use library"><LibraryIcon /></ToolButton>
        <Divider />
        <Buttons items={[["Script", <ScriptIcon label="SCR" />], ["Run", <ScriptIcon label="ULP" />]]} />
        <Divider />
        <Buttons items={zoomTools} />
        <Divider />
        <Buttons items={[["Undo", <UndoIcon />], ["Redo", <UndoIcon flip />]]} />
        <Divider />
        <Buttons items={[["Stop", <StopIcon />], ["Go", <TrafficIcon />]]} />
        <Divider />
        <ToolButton aria-label="Help"><HelpIcon /></ToolButton>
        <BarEnd />
        <Grip $size={22} />
        <LinkButton $gap={7} aria-label="Design link"><DesignLinkLogo /></LinkButton>
        <LinkButton $gap={8} aria-label="Design link menu">
          <svg width="9" height="5"><path d="M0 0h9L4.500 5z" /></svg>
        </LinkButton>
        <LinkButton $gap={7} aria-label="PCB quote"><PcbLogo /></LinkButton>
      </Toolbar>
      <Toolbar $height={29}>
        <Grip $size={16} $gap={1} />
        <ToolButton aria-label="Grid">
          <Icon>
            {[6, 9, 12, 15, 18].map((y) => (
              <Line key={y} d={`M4 ${y + 0.5}h14`} dash="1 2" />
            ))}
            <Drop y={20} />
          </Icon>
        </ToolButton>
      </Toolbar>
      <Body>
        <Tools>
          <GripRow><Grip $size={36} $across /></GripRow>
          {palette.map((group, i) => (
            <React.Fragment key={i}>
              {i > 0 && <ToolRule />}
              <ToolGrid>
                {group.map(([label, icon, first]) => (
                  <PaletteButton key={label} $first={first} aria-label={label}>{icon}</PaletteButton>
                ))}
              </ToolGrid>
            </React.Fragment>
          ))}
        </Tools>
        <Dock>
          <DockTitle>
            <span>She...</span>
            <DockButton aria-label="Float">
              <svg width="12" height="12" fill="none" stroke="#6c6862">
                <rect x="0.500" y="0.500" width="10" height="10" rx="2" />
                <path d="M4.500 3.500h4v4h-4zM6.500 8v1.500h-4v-4H4" />
              </svg>
            </DockButton>
            <DockButton aria-label="Close">
              <svg width="12" height="12" fill="none" stroke="#6c6862">
                <rect x="0.500" y="0.500" width="10" height="10" rx="2" />
                <path d="M3 3l5 5M8 3l-5 5" strokeWidth="2" />
              </svg>
            </DockButton>
          </DockTitle>
          <DockBody>
            <SheetList>
              <Sheet><SheetPreview /><span>1</span></Sheet>
            </SheetList>
            <ScrollBar top={1} />
          </DockBody>
        </Dock>
        <Splitter><Grip $size={40} /></Splitter>
        <Editor>
          <CommandRow>
            <Sunken $width={119}>0.1 inch (1.0 1.4)</Sunken>
            <Sunken $width={13} />
            <Combo>
              <Caret />
              <CommandInput aria-label="Command" />
              <ComboButton aria-label="History">
                <svg width="10" height="8"><path d="M1 1.500l4 4 4-4" fill="none" stroke="#000" strokeWidth="2" /></svg>
              </ComboButton>
            </Combo>
          </CommandRow>
          <View>
            <Schematic />
            <ScrollBar top={1} />
            <ScrollBar across />
          </View>
        </Editor>
      </Body>
      <StatusBar />
    </Page>
  );
}
